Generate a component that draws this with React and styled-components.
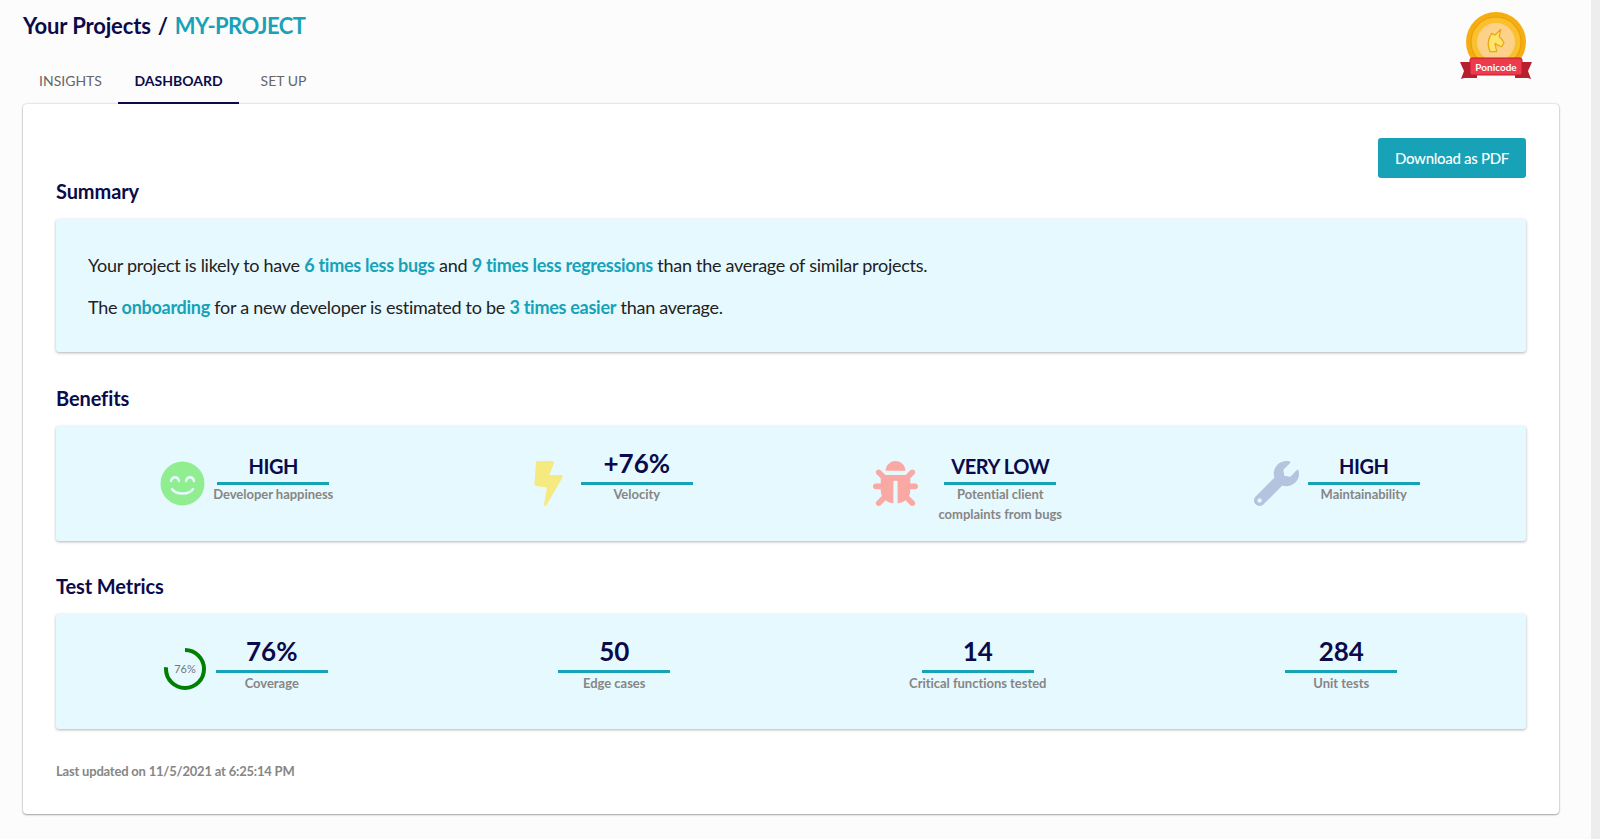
import React from 'react';
import styled, { createGlobalStyle } from 'styled-components';
import { FaBug, FaWrench } from 'react-icons/fa';

const navy = '#0b0b4b';
const teal = '#17a2b8';
const grey = '#868686';

const GlobalStyle = createGlobalStyle`
  html, body {
    margin: 0;
    height: 839px;
    overflow: hidden;
    background: #fcfcfc;
    font-family: Lato, "Open Sans", sans-serif;
  }
  * { box-sizing: border-box; }
`;

const Page = styled.div`
  display: flex;
  height: 839px;
`;

const Main = styled.div`
  flex: 1;
  padding: 12px 32px 0 23px;
`;

const ScrollTrack = styled.div`
  width: 9px;
  background: #ededed;
`;

const Header = styled.header`
  display: flex;
  justify-content: space-between;
  height: 92px;
`;

const Breadcrumb = styled.h1`
  margin: 0;
  font-size: 22px;
  line-height: 28px;
  font-weight: 700;
  letter-spacing: -0.15px;
  color: ${navy};
`;

const Slash = styled.span`
  margin: 0 7px;
`;

const ProjectName = styled.span`
  color: ${teal};
  letter-spacing: -0.55px;
`;

const Tabs = styled.nav`
  display: flex;
  margin-top: 18px;
`;

const Tab = styled.a`
  display: flex;
  align-items: center;
  justify-content: center;
  height: 46px;
  width: ${p => p.$width}px;
  font-size: 14px;
  font-weight: ${p => (p.$active ? 700 : 400)};
  color: ${p => (p.$active ? navy : '#666')};
  border-bottom: 2px solid ${p => (p.$active ? navy : 'transparent')};
`;

const Badge = styled.svg`
  width: 78px;
  height: 72px;
  margin: 0 22px 0 0;
`;

const Card = styled.main`
  height: 710px;
  padding: 34px 33px 0 33px;
  background: #fff;
  border-radius: 4px;
  box-shadow: 0 0 2px rgba(0, 0, 0, 0.25), 0 1px 2px rgba(0, 0, 0, 0.3);
`;

const SummaryHead = styled.div`
  display: flex;
  justify-content: space-between;
  align-items: flex-start;
  height: 81px;
`;

const DownloadButton = styled.button`
  width: 148px;
  height: 40px;
  border: 0;
  border-radius: 3px;
  background: ${teal};
  color: #fff;
  font-family: inherit;
  font-size: 15px;
  font-weight: 500;
  letter-spacing: -0.3px;
`;

const SectionTitle = styled.h2`
  margin: ${p => p.$top || 0}px 0 16px;
  font-size: 20px;
  line-height: 24px;
  font-weight: 700;
  letter-spacing: -0.1px;
  color: ${navy};
`;

const Panel = styled.section`
  background: #e6f9ff;
  border-radius: 3px;
  box-shadow: 0 1px 3px rgba(0, 0, 0, 0.3);
`;

const SummaryPanel = styled(Panel)`
  height: 133px;
  padding: 33px 32px 0;
`;

const SummaryText = styled.p`
  margin: 0 0 15px;
  font-size: 18px;
  line-height: 27px;
  letter-spacing: -0.27px;
  color: #222;
`;

const Hl = styled.b`
  color: ${teal};
  font-weight: 700;
`;

const Grid = styled(Panel)`
  display: grid;
  grid-template-columns: repeat(4, 1fr);
  height: ${p => p.$height}px;
  padding: ${p => p.$top}px 7px 0 9px;
`;

const Item = styled.div`
  display: flex;
  justify-content: center;
  align-items: flex-start;
  gap: 8px;
`;

const IconSlot = styled.div`
  display: flex;
  justify-content: center;
  width: 45px;
  height: 45px;
  margin-top: 9px;
  color: ${p => p.$color};
  font-size: 45px;
`;

const Stat = styled.div`
  display: flex;
  flex-direction: column;
  align-items: center;
  min-width: 113px;
  width: ${p => (p.$width ? `${p.$width}px` : 'auto')};
  margin-left: ${p => (p.$shift ? 8 : 0)}px;
`;

const Value = styled.div`
  display: flex;
  align-items: flex-end;
  height: 30px;
  font-size: ${p => (p.$big ? 26 : 20)}px;
  line-height: ${p => (p.$big ? 37 : 31)}px;
  letter-spacing: ${p => (p.$big ? 0 : -0.4)}px;
  font-weight: 700;
  color: ${navy};
`;

const Rule = styled.div`
  width: 112px;
  height: 3px;
  background: ${teal};
`;

const Label = styled.div`
  margin-top: ${p => (p.$metric ? 0 : -1)}px;
  font-size: 13px;
  line-height: 20px;
  font-weight: 700;
  letter-spacing: -0.03px;
  color: ${grey};
  text-align: center;
`;

const Ring = styled.svg`
  width: 44px;
  height: 44px;
  margin: 7px 0 0 -2px;
`;

const Updated = styled.footer`
  margin-top: 32px;
  font-size: 13px;
  line-height: 20px;
  font-weight: 700;
  letter-spacing: -0.2px;
  color: ${grey};
`;

const Smile = () => (
  <svg width="45" height="45" viewBox="0 0 45 45">
    <circle cx="22.5" cy="22.5" r="22" fill="#90ee90" />
    <g fill="none" stroke="#e6f9ff" strokeWidth="2.4" strokeLinecap="round">
      <path d="M11 20c1-5 7-5 8 0" />
      <path d="M26 20c1-5 7-5 8 0" />
      <path d="M12 28c4 6 17 6 21 0" />
    </g>
  </svg>
);

const Bolt = () => (
  <svg width="45" height="45" viewBox="0 0 45 45">
    <path
      d="M10.500 0H25c1.500 0 2.300 1 1.900 2.300L22.500 14H34c1.500 0 2.200 1.300 1.500 2.600L19.500 44c-.8 1.400-2.700.8-2.500-.8L20 26.500 8.800 25c-1-.1-1.500-.9-1.400-1.900L9 1.300C9.100.5 9.700 0 10.500 0z"
      fill="#f6e97f"
    />
  </svg>
);

const CoverageRing = () => (
  <Ring viewBox="0 0 44 44">
    <circle
      cx="22"
      cy="22"
      r="19"
      fill="none"
      stroke="#008000"
      strokeWidth="4"
      strokeDasharray={`${0.76 * 2 * Math.PI * 19} 200`}
      transform="rotate(-90 22 22)"
    />
    <text x="22" y="26" textAnchor="middle" fontFamily="Lato" fontSize="11" fill="#777">76%</text>
  </Ring>
);

const PonicodeBadge = () => (
  <Badge viewBox="0 0 78 72">
    <circle cx="37" cy="30" r="30" fill="#f5ae12" />
    <circle cx="37" cy="30" r="25" fill="#fbc02d" stroke="#ee9f0a" strokeWidth="1.200" />
    <circle cx="37" cy="30" r="19" fill="#fcd28a" />
    <path
      d="M41.700 17.300L40.300 24.700C42.500 26.500 44 28.500 45 30.700L42.700 34.700C40.500 34.500 38 33 36 31.300L37.700 39.700H31C29.500 36 28.800 33 29.300 29.700C29.800 26.500 31 23.500 32.700 21.300L36 23Z"
      fill="#fde46b"
      stroke="#eda512"
      strokeWidth="1.200"
      strokeLinejoin="round"
    />
    <path d="M1 50h17v16H5l-3 1 3-8z" fill="#b81f2e" />
    <path d="M73 50H56v16h13l3 1-3-8z" fill="#b81f2e" />
    <rect x="11" y="46" width="52" height="17" rx="2" fill="#ee3b4c" stroke="#b81f2e" strokeWidth="1" />
    <text x="37" y="58.500" textAnchor="middle" fontFamily="Lato" fontWeight="700" fontSize="10" fill="#fff">Ponicode</text>
  </Badge>
);

const benefits = [
  { icon: <Smile />, value: 'HIGH', label: 'Developer happiness' },
  { icon: <Bolt />, value: '+76%', big: true, label: 'Velocity' },
  { icon: <FaBug />, color: '#f9a8a4', value: 'VERY LOW', width: 148, label: 'Potential client complaints from bugs' },
  { icon: <FaWrench />, color: '#b3c5de', value: 'HIGH', label: 'Maintainability' },
];

const metrics = [
  { value: '50', label: 'Edge cases' },
  { value: '14', label: 'Critical functions tested' },
  { value: '284', label: 'Unit tests' },
];

export default function App() {
  return (
    <Page>
      <GlobalStyle />
      <Main>
        <Header>
          <div>
            <Breadcrumb>
              Your Projects<Slash>/</Slash><ProjectName>MY-PROJECT</ProjectName>
            </Breadcrumb>
            <Tabs>
              <Tab $width={95}>INSIGHTS</Tab>
              <Tab $width={121} $active>DASHBOARD</Tab>
              <Tab $width={89}>SET UP</Tab>
            </Tabs>
          </div>
          <PonicodeBadge />
        </Header>
        <Card>
          <SummaryHead>
            <SectionTitle $top={41}>Summary</SectionTitle>
            <DownloadButton>Download as PDF</DownloadButton>
          </SummaryHead>
          <SummaryPanel>
            <SummaryText>
              Your project is likely to have <Hl>6 times less bugs</Hl> and <Hl>9 times less regressions</Hl> than the average of similar projects.
            </SummaryText>
            <SummaryText>
              The <Hl>onboarding</Hl> for a new developer is estimated to be <Hl>3 times easier</Hl> than average.
            </SummaryText>
          </SummaryPanel>
          <SectionTitle $top={34}>Benefits</SectionTitle>
          <Grid $height={115} $top={26}>
            {benefits.map(b => (
              <Item key={b.label}>
                <IconSlot $color={b.color}>{b.icon}</IconSlot>
                <Stat $width={b.width}>
                  <Value $big={b.big}>{b.value}</Value>
                  <Rule />
                  <Label>{b.label}</Label>
                </Stat>
              </Item>
            ))}
          </Grid>
          <SectionTitle $top={33}>Test Metrics</SectionTitle>
          <Grid $height={115} $top={26}>
            <Item>
              <CoverageRing />
              <Stat>
                <Value $big>76%</Value>
                <Rule />
                <Label $metric>Coverage</Label>
              </Stat>
            </Item>
            {metrics.map(m => (
              <Item key={m.label}>
                <Stat $shift>
                  <Value $big>{m.value}</Value>
                  <Rule />
                  <Label $metric>{m.label}</Label>
                </Stat>
              </Item>
            ))}
          </Grid>
          <Updated>Last updated on 11/5/2021 at 6:25:14 PM</Updated>
        </Card>
      </Main>
      <ScrollTrack />
    </Page>
  );
}
